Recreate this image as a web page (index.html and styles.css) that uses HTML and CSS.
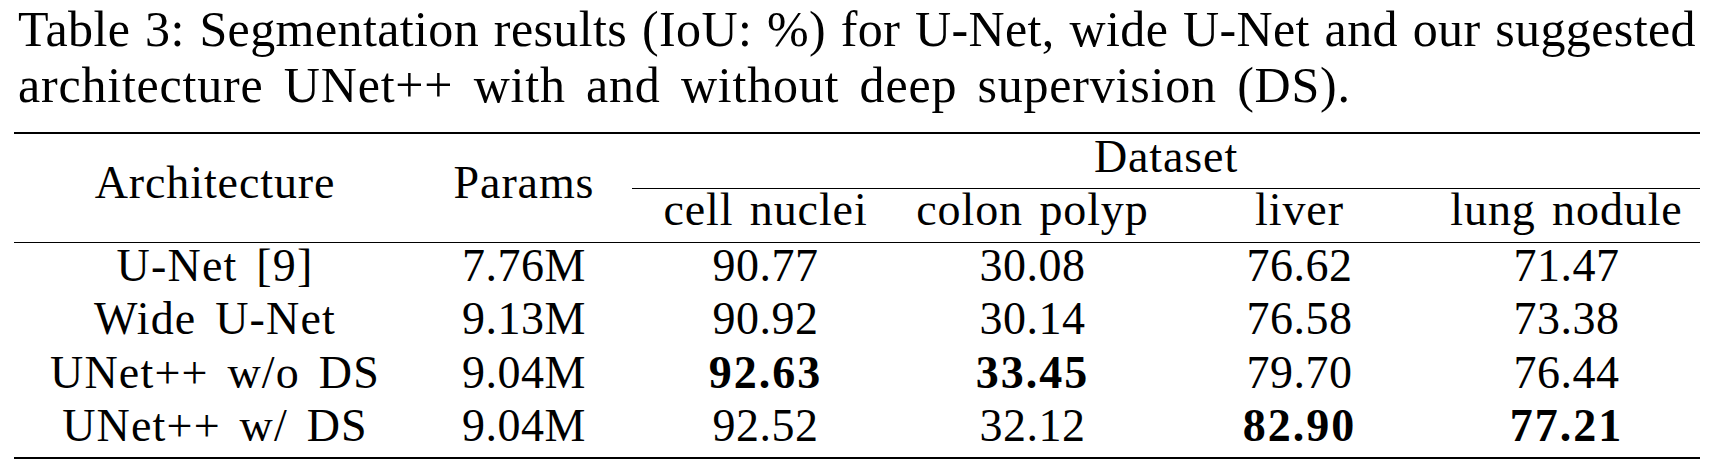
FILE: index.html
```html
<!DOCTYPE html>
<html lang="en">
<head>
<meta charset="utf-8">
<title>Table 3</title>
<link rel="stylesheet" href="styles.css">
</head>
<body>
<div class="page">
  <p class="caption"><span class="cap-line1">Table 3: Segmentation results (IoU: %) for U-Net, wide U-Net and our suggested</span><span class="cap-line2">architecture UNet++ with and without deep supervision (DS).</span></p>
  <div class="table">
    <div class="thead">
      <div class="th arch">Architecture</div>
      <div class="th params">Params</div>
      <div class="th dataset">Dataset</div>
      <div class="th sub">cell nuclei</div>
      <div class="th sub">colon polyp</div>
      <div class="th sub">liver</div>
      <div class="th sub">lung nodule</div>
    </div>
    <div class="tbody">
      <div class="td name">U-Net [9]</div>
      <div class="td">7.76M</div>
      <div class="td">90.77</div>
      <div class="td">30.08</div>
      <div class="td">76.62</div>
      <div class="td">71.47</div>

      <div class="td name">Wide U-Net</div>
      <div class="td">9.13M</div>
      <div class="td">90.92</div>
      <div class="td">30.14</div>
      <div class="td">76.58</div>
      <div class="td">73.38</div>

      <div class="td name">UNet++ w/o DS</div>
      <div class="td">9.04M</div>
      <div class="td"><b class="best">92.63</b></div>
      <div class="td"><b class="best">33.45</b></div>
      <div class="td">79.70</div>
      <div class="td">76.44</div>

      <div class="td name">UNet++ w/ DS</div>
      <div class="td">9.04M</div>
      <div class="td">92.52</div>
      <div class="td">32.12</div>
      <div class="td"><b class="best">82.90</b></div>
      <div class="td"><b class="best">77.21</b></div>
    </div>
  </div>
</div>
</body>
</html>
```
FILE: styles.css
```css
html, body {
  margin: 0;
  padding: 0;
  background: #ffffff;
  color: #000000;
  font-family: "Liberation Serif", "Times New Roman", serif;
}

.page {
  width: 1686px;
  padding: 1px 0 0 14px;
}

.caption {
  margin: 0 4px 19px 4px;
  font-size: 50px;
  line-height: 56px;
  letter-spacing: 0.4px;
}

.cap-line1 {
  display: block;
  text-align: justify;
  text-align-last: justify;
}

.cap-line2 {
  display: block;
  text-align: left;
  letter-spacing: 0.8px;
  word-spacing: 7px;
}

.table {
  border-top: 2px solid #000;
  border-bottom: 2px solid #000;
  font-size: 46px;
  letter-spacing: 0.5px;
}

.thead,
.tbody {
  display: grid;
  grid-template-columns: 402px 216px repeat(4, 267px);
}

.thead {
  grid-template-rows: 55px 53px;
  border-bottom: 1px solid #000;
}

.tbody {
  padding-bottom: 1px;
}

.th,
.td {
  text-align: center;
  white-space: nowrap;
}

.th {
  letter-spacing: 0.9px;
  word-spacing: 4px;
}

.arch,
.params {
  grid-row: 1 / 3;
  line-height: 46px;
  padding-top: 26px;
}

.dataset {
  grid-column: 3 / 7;
  line-height: 46px;
  border-bottom: 1px solid #000;
}

.sub {
  grid-row: 2;
  line-height: 41px;
}

.td {
  line-height: 46px;
  padding-bottom: 7.33px;
}

.name {
  letter-spacing: 1.2px;
  word-spacing: 6px;
}

.best {
  font-weight: bold;
  letter-spacing: 2px;
}
```
